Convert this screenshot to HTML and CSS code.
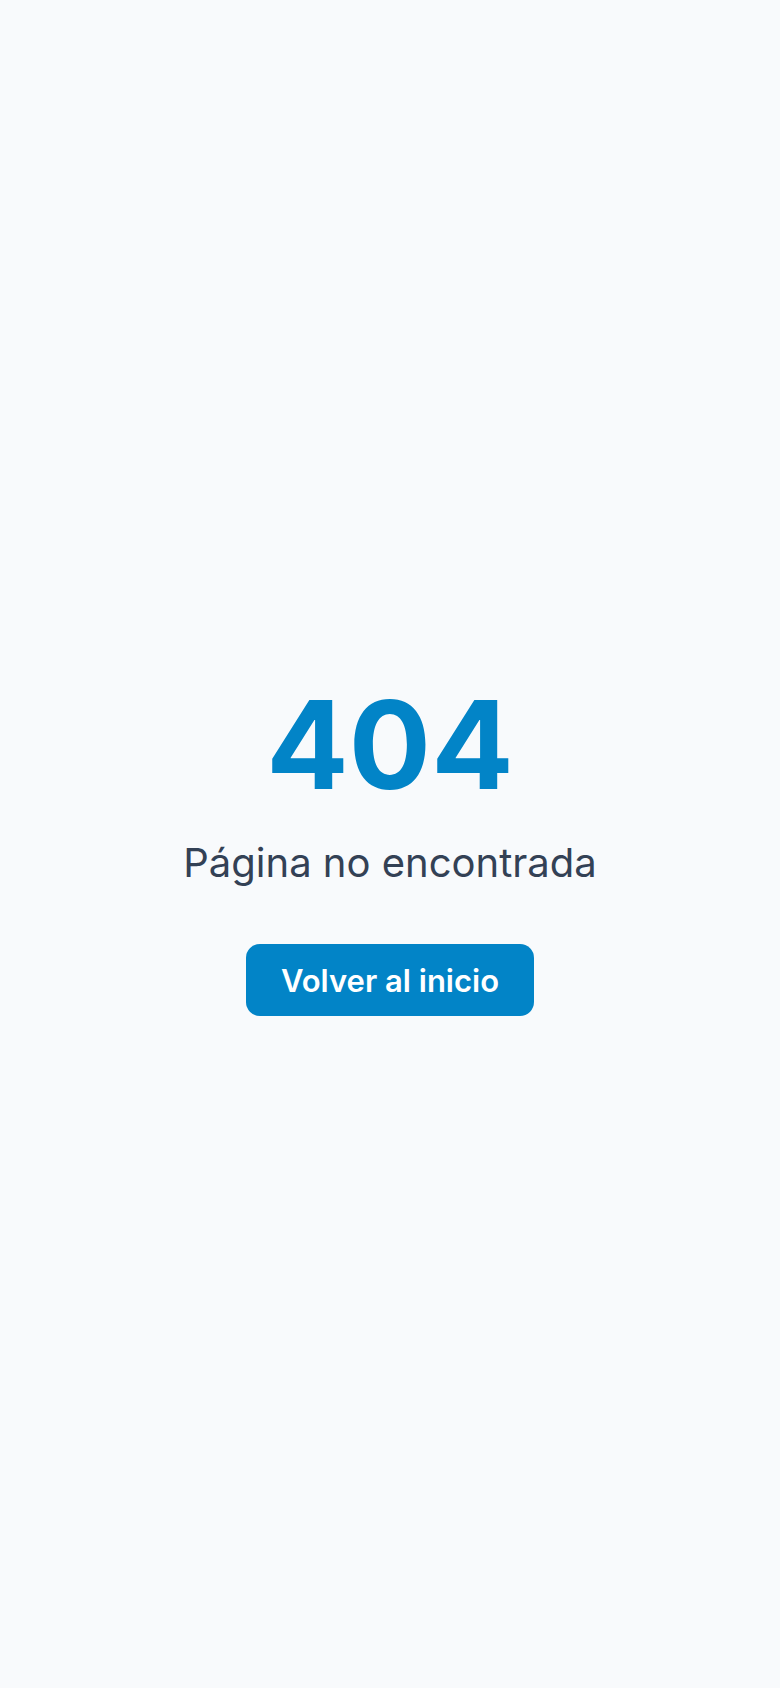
FILE: index.html
```html
<!DOCTYPE html>
<html lang="es">
<head>
<meta charset="utf-8">
<title>404</title>
<link rel="stylesheet" href="styles.css">
</head>
<body>
<main class="page">
  <h1 class="code">404</h1>
  <p class="message">Página no encontrada</p>
  <a class="btn" href="#">Volver al inicio</a>
</main>
</body>
</html>
```
FILE: styles.css
```css
html, body {
  margin: 0;
  padding: 0;
  background: #f8fafc;
}
body {
  font-family: Inter, "Noto Sans", sans-serif;
}
.page {
  box-sizing: border-box;
  min-height: 1688px;
  padding-top: 12px;
  display: flex;
  flex-direction: column;
  align-items: center;
  justify-content: center;
}
.code {
  margin: 0;
  font-size: 122px;
  line-height: 1;
  font-weight: 700;
  color: #0284c7;
}
.message {
  margin: 33px 0 0;
  font-size: 40px;
  line-height: 48px;
  color: #334155;
}
.btn {
  margin-top: 57px;
  display: inline-flex;
  align-items: center;
  justify-content: center;
  width: 288px;
  height: 72px;
  border-radius: 14px;
  background: #0284c7;
  color: #ffffff;
  font-size: 31px;
  font-weight: 600;
  text-decoration: none;
}
```
